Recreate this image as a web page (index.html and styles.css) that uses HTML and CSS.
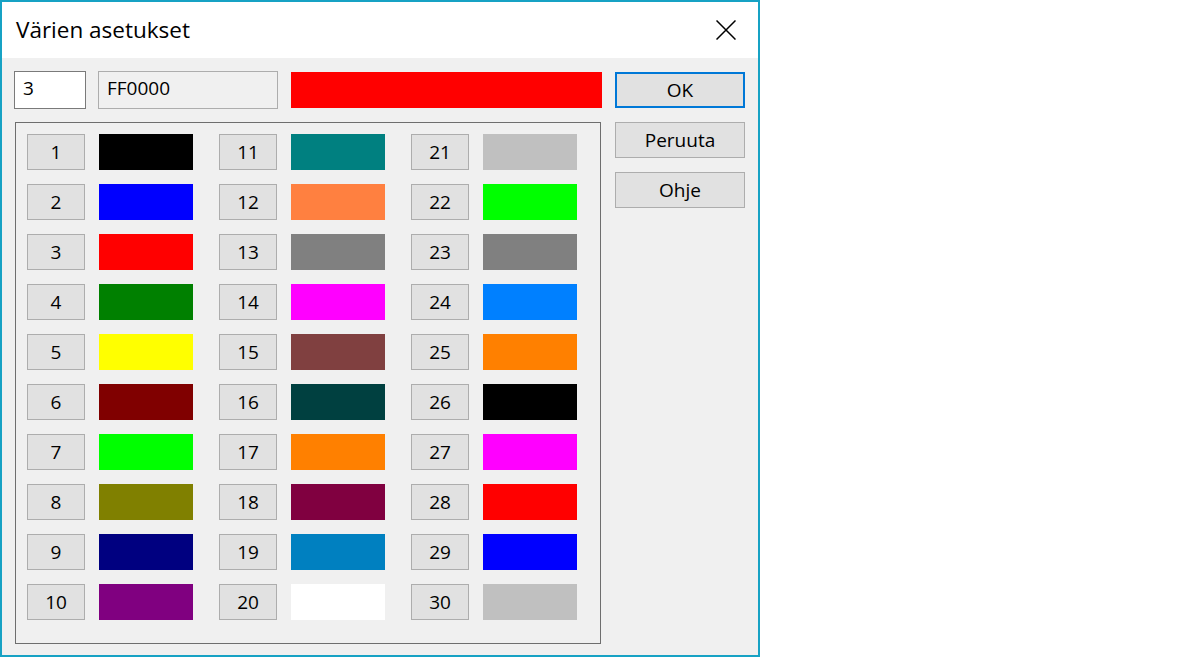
FILE: index.html
```html
<!DOCTYPE html>
<html lang="fi">
<head>
<meta charset="utf-8">
<title>Värien asetukset</title>
<link rel="stylesheet" href="styles.css">
</head>
<body>
<div class="dialog">
  <div class="titlebar">
    <span class="title">Värien asetukset</span>
    <span class="close">
      <svg width="20" height="20" viewBox="0 0 20 20"><path d="M0.5 0.5 L19.5 19.5 M19.5 0.5 L0.5 19.5" stroke="#000" stroke-width="1.5" fill="none"/></svg>
    </span>
  </div>
  <div class="content">
    <div class="main">
      <div class="toprow">
        <div class="num-input">3</div>
        <div class="hex-field">FF0000</div>
        <div class="preview"></div>
      </div>
      <div class="group">
        <div class="grid">
          <div class="cell"><span class="btn">1</span><span class="swatch" style="background:#000000"></span></div>
          <div class="cell"><span class="btn">2</span><span class="swatch" style="background:#0000ff"></span></div>
          <div class="cell"><span class="btn">3</span><span class="swatch" style="background:#ff0000"></span></div>
          <div class="cell"><span class="btn">4</span><span class="swatch" style="background:#008000"></span></div>
          <div class="cell"><span class="btn">5</span><span class="swatch" style="background:#ffff00"></span></div>
          <div class="cell"><span class="btn">6</span><span class="swatch" style="background:#800000"></span></div>
          <div class="cell"><span class="btn">7</span><span class="swatch" style="background:#00ff00"></span></div>
          <div class="cell"><span class="btn">8</span><span class="swatch" style="background:#808000"></span></div>
          <div class="cell"><span class="btn">9</span><span class="swatch" style="background:#000080"></span></div>
          <div class="cell"><span class="btn">10</span><span class="swatch" style="background:#800080"></span></div>
          <div class="cell"><span class="btn">11</span><span class="swatch" style="background:#008080"></span></div>
          <div class="cell"><span class="btn">12</span><span class="swatch" style="background:#ff8040"></span></div>
          <div class="cell"><span class="btn">13</span><span class="swatch" style="background:#808080"></span></div>
          <div class="cell"><span class="btn">14</span><span class="swatch" style="background:#ff00ff"></span></div>
          <div class="cell"><span class="btn">15</span><span class="swatch" style="background:#804040"></span></div>
          <div class="cell"><span class="btn">16</span><span class="swatch" style="background:#004040"></span></div>
          <div class="cell"><span class="btn">17</span><span class="swatch" style="background:#ff8000"></span></div>
          <div class="cell"><span class="btn">18</span><span class="swatch" style="background:#800040"></span></div>
          <div class="cell"><span class="btn">19</span><span class="swatch" style="background:#0080c0"></span></div>
          <div class="cell"><span class="btn">20</span><span class="swatch" style="background:#ffffff"></span></div>
          <div class="cell"><span class="btn">21</span><span class="swatch" style="background:#c0c0c0"></span></div>
          <div class="cell"><span class="btn">22</span><span class="swatch" style="background:#00ff00"></span></div>
          <div class="cell"><span class="btn">23</span><span class="swatch" style="background:#808080"></span></div>
          <div class="cell"><span class="btn">24</span><span class="swatch" style="background:#0080ff"></span></div>
          <div class="cell"><span class="btn">25</span><span class="swatch" style="background:#ff8000"></span></div>
          <div class="cell"><span class="btn">26</span><span class="swatch" style="background:#000000"></span></div>
          <div class="cell"><span class="btn">27</span><span class="swatch" style="background:#ff00ff"></span></div>
          <div class="cell"><span class="btn">28</span><span class="swatch" style="background:#ff0000"></span></div>
          <div class="cell"><span class="btn">29</span><span class="swatch" style="background:#0000ff"></span></div>
          <div class="cell"><span class="btn">30</span><span class="swatch" style="background:#c0c0c0"></span></div>
        </div>
      </div>
    </div>
    <div class="side">
      <button class="dlg-btn default">OK</button>
      <button class="dlg-btn">Peruuta</button>
      <button class="dlg-btn">Ohje</button>
    </div>
  </div>
</div>
</body>
</html>
```

FILE: styles.css
```css
html, body {
  margin: 0;
  padding: 0;
  background: #ffffff;
}

body {
  font-family: "Open Sans", "Noto Sans", "Liberation Sans", sans-serif;
  color: #000;
}

.dialog {
  box-sizing: border-box;
  width: 760px;
  height: 657px;
  border: 2px solid #17a2c4;
  background: #f0f0f0;
  display: flex;
  flex-direction: column;
}

.titlebar {
  height: 56px;
  background: #ffffff;
  display: flex;
  align-items: center;
  justify-content: space-between;
  padding: 0 22px 0 14px;
  flex: none;
}

.title {
  font-size: 22.5px;
  line-height: 1;
  margin-top: 0;
}

.close {
  display: flex;
}

.content {
  flex: 1;
  display: flex;
  padding: 13px 13px 11px 12px;
  gap: 13px;
}

.main {
  width: 588px;
  display: flex;
  flex-direction: column;
  gap: 14px;
}

.toprow {
  display: flex;
  align-items: flex-start;
  height: 37px;
}

.num-input,
.hex-field {
  box-sizing: border-box;
  height: 38px;
  font-size: 19px;
  line-height: 1;
  display: flex;
  align-items: center;
  padding: 0 0 4px 8px;
}

.num-input {
  width: 72px;
  background: #ffffff;
  border: 1px solid #7a7a7a;
}

.hex-field {
  width: 180px;
  margin-left: 12px;
  background: #f0f0f0;
  border: 1px solid #adadad;
}

.preview {
  width: 311px;
  height: 36px;
  margin-left: 13px;
  margin-top: 1px;
  background: #ff0000;
}

.group {
  box-sizing: border-box;
  width: 586px;
  height: 522px;
  margin-left: 1px;
  border: 1px solid #6e6e6e;
  padding: 11px 0 0 11px;
}

.grid {
  display: grid;
  grid-auto-flow: column;
  grid-template-rows: repeat(10, 36px);
  grid-template-columns: repeat(3, 166px);
  row-gap: 14px;
  column-gap: 26px;
}

.cell {
  display: flex;
  gap: 14px;
}

.btn {
  box-sizing: border-box;
  width: 58px;
  height: 36px;
  background: #e1e1e1;
  border: 1px solid #adadad;
  font-size: 19px;
  line-height: 1;
  display: flex;
  align-items: center;
  justify-content: center;
  padding-bottom: 0;
}

.swatch {
  width: 94px;
  height: 36px;
}

.side {
  width: 130px;
  display: flex;
  flex-direction: column;
  gap: 14px;
  padding-top: 1px;
}

.dlg-btn {
  box-sizing: border-box;
  width: 130px;
  height: 36px;
  background: #e1e1e1;
  border: 1px solid #adadad;
  font-family: inherit;
  font-size: 19px;
  line-height: 1;
  color: #000;
  padding: 0;
  margin: 0;
}

.dlg-btn.default {
  border: 2px solid #0078d7;
}
```
